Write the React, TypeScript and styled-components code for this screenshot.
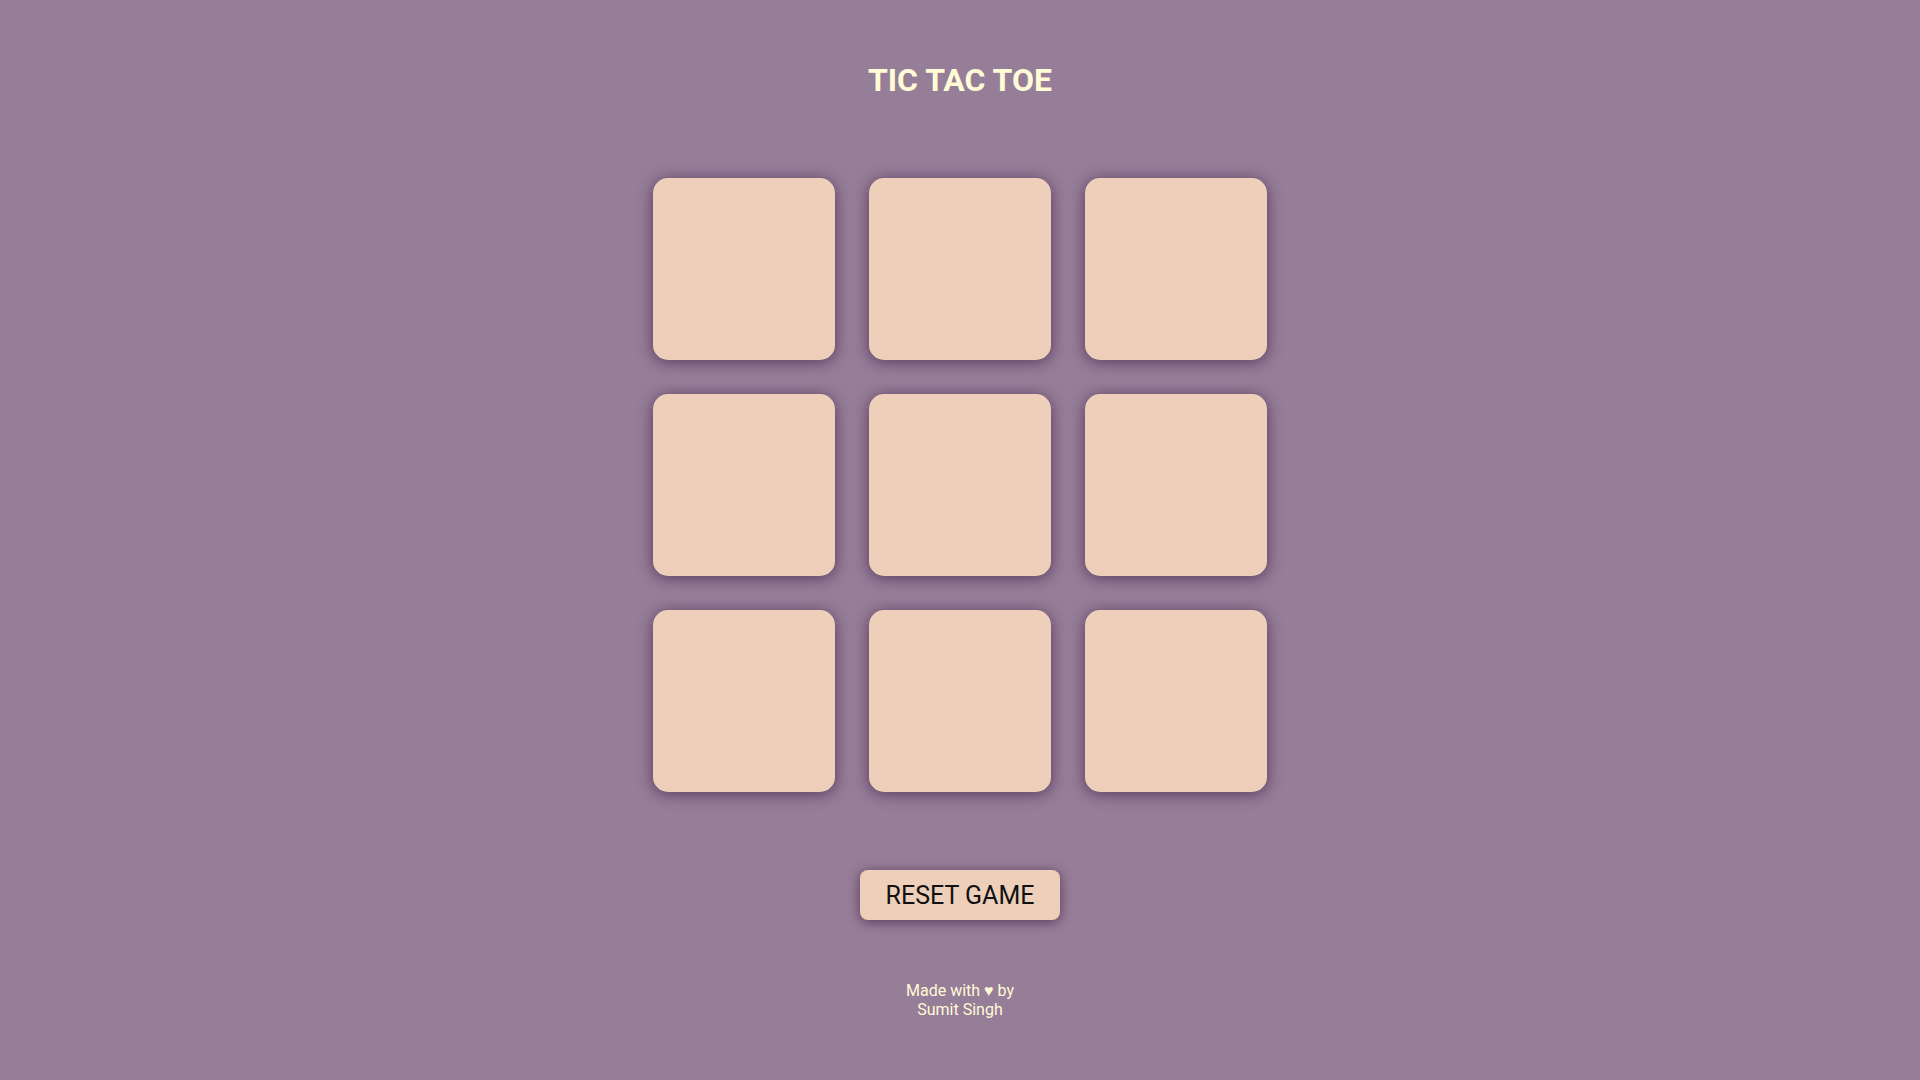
import * as React from 'react';
import styled, { createGlobalStyle } from 'styled-components';

const GlobalStyle = createGlobalStyle`
    html, body {
        margin: 0;
        padding: 0;
        background: #967d98;
        font-family: Roboto, 'Liberation Sans', sans-serif;
    }
`;

const Page = styled.div`
    min-height: 100vh;
    display: flex;
    flex-direction: column;
    align-items: center;
    padding-top: 62px;
    box-sizing: border-box;
`;

const Title = styled.h1`
    margin: 0;
    font-size: 32px;
    line-height: 37px;
    font-weight: 700;
    color: #fffbd6;
`;

const Board = styled.div`
    margin-top: 79px;
    display: grid;
    grid-template-columns: repeat(3, 182px);
    grid-auto-rows: 182px;
    gap: 34px;
`;

const Cell = styled.div`
    background: #eecfb9;
    border-radius: 15px;
    box-shadow: 0 2px 15px rgba(45, 15, 50, 0.6);
    cursor: pointer;
`;

const ResetButton = styled.button`
    margin-top: 78px;
    width: 200px;
    height: 50px;
    border: none;
    border-radius: 8px;
    background: #eecfb9;
    color: #111;
    font-family: Roboto, 'Liberation Sans', sans-serif;
    font-size: 25px;
    box-shadow: 0 2px 12px rgba(45, 15, 50, 0.6);
    cursor: pointer;
`;

const Footer = styled.footer`
    margin-top: 61px;
    color: #fffbd6;
    font-size: 16px;
    line-height: 19px;
    text-align: center;
`;

function App(): React.ReactElement {
    const cells = Array.from({ length: 9 }, (_, i) => i);

    return (
        <>
            <GlobalStyle />
            <Page>
                <Title>TIC TAC TOE</Title>
                <Board>
                    {cells.map((i) => (
                        <Cell key={i} />
                    ))}
                </Board>
                <ResetButton>RESET GAME</ResetButton>
                <Footer>
                    Made with ♥ by
                    <br />
                    Sumit Singh
                </Footer>
            </Page>
        </>
    );
}

export default App;
